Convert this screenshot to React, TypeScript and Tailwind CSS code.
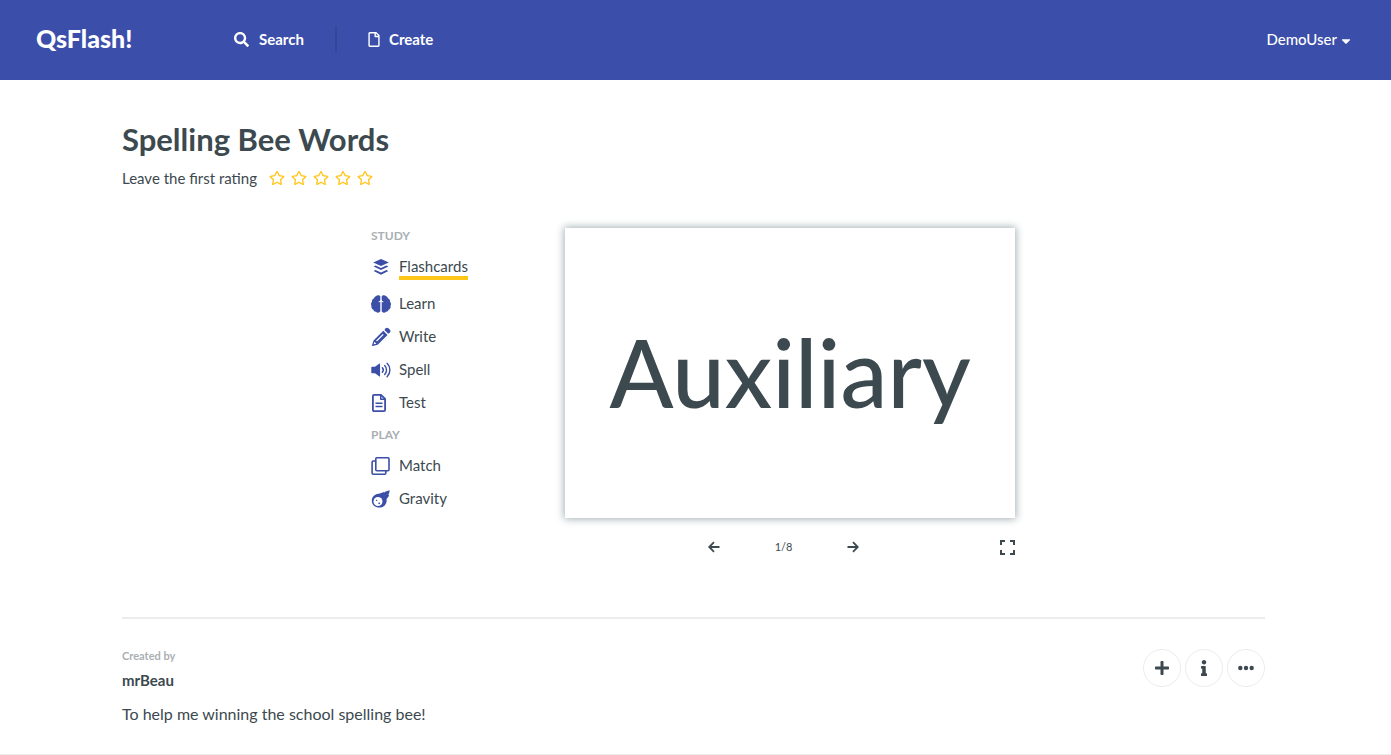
import { FaSearch, FaRegFile, FaRegStar, FaPlus, FaInfo, FaCaretDown } from 'react-icons/fa';
import type { ReactNode } from 'react';

function LayersIcon() {
  return (
    <svg viewBox="0 0 20 20" className="size-5" aria-hidden="true">
      <path d="M10 2 17.800 5.500 10 9 2.200 5.500Z" fill="currentColor" />
      <path d="m2.600 9.400 2-.9 5.400 2.400 5.400-2.400 2 .9L10 13Z" fill="currentColor" />
      <path d="m2.600 14 2-.9 5.400 2.400 5.400-2.400 2 .9L10 17.800Z" fill="currentColor" />
    </svg>
  );
}

function BrainIcon() {
  return (
    <svg viewBox="0 0 20 20" className="size-5" fill="currentColor" aria-hidden="true">
      <path d="M9.300 2.300v15c-.6 1.600-3.200 1.800-4.300.5-1.300.1-2.400-.8-2.600-2C.7 15 0 13.300.5 11.900-.3 10.600-.1 8.700 1 7.700c-.2-1.500.5-2.700 1.800-3.100C3.400 2.900 5 1.400 6.800 1.200c1.200-.1 2.200.3 2.500 1.100Z" />
      <path d="M10.700 2.300v15c.6 1.600 3.200 1.800 4.300.5 1.300.1 2.400-.8 2.600-2 1.700-.8 2.400-2.500 1.900-3.900.8-1.300.6-3.200-.5-4.200.2-1.500-.5-2.700-1.800-3.100-.6-1.700-2.200-3.200-4-3.400-1.200-.1-2.200.3-2.500 1.100Z" />
      <path d="M7.700 7.800c1.200 0 2-.5 2.300-1.300.3.800 1.100 1.300 2.300 1.300" fill="none" stroke="#fff" strokeWidth="1.100" />
    </svg>
  );
}

function PencilIcon() {
  return (
    <svg viewBox="0 0 20 20" className="size-5" fill="currentColor" aria-hidden="true">
      <path d="m13.900 2.100.8-.8c.8-.8 1.900-.8 2.700 0l1.500 1.500c.8.800.8 1.900 0 2.700l-.8.800c-.4.400-.9.400-1.300 0l-2.900-2.900c-.4-.4-.4-.9 0-1.300Z" />
      <path fillRule="evenodd" d="m12.300 3.800 4.200 4.200-9.800 9.700-5.100 1.200c-.4.100-.7-.2-.6-.6l1.500-4.900ZM11.800 6.900l-6.700 6.700.9.900 6.700-6.700ZM3.400 14.700l-.7 2.600 2.700-.6Z" />
    </svg>
  );
}

function SpeakerIcon() {
  return (
    <svg viewBox="0 0 21 20" className="h-5 w-[21px]" fill="none" stroke="currentColor" strokeWidth="1.500" strokeLinecap="round" aria-hidden="true">
      <path d="M.3 7.300c0-.4.300-.7.700-.7h3.200L8.500 3.400c.5-.4 1-.2 1 .4v12.400c0 .6-.5.800-1 .4l-4.300-3.200H1c-.4 0-.7-.3-.7-.7Z" fill="currentColor" stroke="none" />
      <path d="M11.900 7.700c1.200 1.300 1.200 3.300 0 4.600M14.400 5.300c2.500 2.600 2.500 6.800 0 9.400M16.900 3c3.900 3.900 3.900 10.100 0 14" />
    </svg>
  );
}

function DocumentIcon() {
  return (
    <svg viewBox="0 0 20 20" className="size-5" fill="none" stroke="currentColor" strokeWidth="1.800" strokeLinejoin="round" aria-hidden="true">
      <path d="M1.900 3a1.200 1.200 0 0 1 1.200-1.200h6.900L14.100 6v11a1.200 1.200 0 0 1-1.200 1.200H3.100A1.200 1.200 0 0 1 1.900 17Z" />
      <path d="M9.700 2v4.300h4.200M4.500 10.300h7M4.500 13.500h7" strokeWidth="1.500" />
    </svg>
  );
}

function CardsIcon() {
  return (
    <svg viewBox="0 0 20 20" className="size-5" fill="none" stroke="currentColor" strokeWidth="1.600" strokeLinejoin="round" aria-hidden="true">
      <rect x="4.800" y="1.800" width="13.200" height="13" rx="1" />
      <path d="M4.500 5H2.300A1.200 1.200 0 0 0 1.100 6.200v10.900a1.200 1.200 0 0 0 1.200 1.200h11.300a1.200 1.200 0 0 0 1.200-1.200v-2" />
    </svg>
  );
}

function CometIcon() {
  return (
    <svg viewBox="0 0 20 20" className="size-5" aria-hidden="true">
      <path d="M18.600 1.300c0 1.900-.5 3.300-1.300 4.600l.8.100c-.5 1.600-1.400 2.800-2.500 4 .7 4.900-2.700 8.600-7.300 8.600C4.100 18.600.8 15.600.8 11.700.8 8 3.600 5.200 7.300 4.800c2-.2 3.900-1.100 5.600-2l-.1.900c1.900-1.100 3.700-2 5.800-2.400Z" fill="currentColor" />
      <circle cx="7" cy="12.500" r="4.500" fill="#fff" />
      <circle cx="5.600" cy="11.400" r=".7" fill="currentColor" />
      <circle cx="8.200" cy="14.300" r=".9" fill="currentColor" />
    </svg>
  );
}

function ArrowIcon({ d }: { d: string }) {
  return (
    <svg viewBox="0 0 12 12" className="size-3" fill="none" stroke="currentColor" strokeWidth="1.800" aria-hidden="true">
      <path d={d} />
    </svg>
  );
}

function FullscreenIcon() {
  return (
    <svg viewBox="0 0 15 15" className="size-[15px]" fill="none" stroke="currentColor" strokeWidth="2" aria-hidden="true">
      <path d="M1 5V1h4M10 1h4v4M14 10v4h-4M5 14H1v-4" />
    </svg>
  );
}

function DotsIcon() {
  return (
    <svg viewBox="0 0 16 16" className="size-4" fill="currentColor" aria-hidden="true">
      <circle cx="2.300" cy="8" r="2.200" />
      <circle cx="8" cy="8" r="2.200" />
      <circle cx="13.700" cy="8" r="2.200" />
    </svg>
  );
}

function MenuItem({ icon, label, active }: { icon: ReactNode; label: string; active?: boolean }) {
  return (
    <li className={active ? 'mb-1' : ''}>
      <a href="#" className="flex h-[33px] items-center gap-2 text-[15px]">
        <span className="flex w-5 shrink-0 text-[#3b4ea8]">{icon}</span>
        <span className={active ? 'mt-[2px] border-b-4 border-[#ffc61a] leading-5' : 'pb-[2px] leading-5'}>{label}</span>
      </a>
    </li>
  );
}

function RoundButton({ label, children }: { label: string; children: ReactNode }) {
  return (
    <button aria-label={label} className="flex size-[38px] items-center justify-center rounded-full border border-[#ececec]">
      {children}
    </button>
  );
}

export default function App() {
  return (
    <div className="font-['Lato',sans-serif] text-[#3c494f]">
      <header className="flex h-20 items-center bg-[#3b4ea9] pr-[38px] pb-[2px] pl-9 text-[15px] font-bold text-white">
        <a href="#" className="w-[198px] text-[25px] font-black">QsFlash!</a>
        <nav className="flex items-center">
          <a href="#" className="flex w-[101px] items-center gap-[10px]"><FaSearch className="size-[15px]" />Search</a>
          <span className="h-[26px] w-[2px] bg-[#354697]" />
          <a href="#" className="ml-[31px] flex items-center gap-[9px]"><FaRegFile className="h-[15px] w-3" />Create</a>
        </nav>
        <button className="ml-auto flex items-center gap-[2px] font-medium">DemoUser<FaCaretDown className="mt-1 size-[14px]" /></button>
      </header>

      <main className="border-b border-[#ececec] pr-[126px] pb-[29px] pl-[122px]">
        <h1 className="pt-10 text-[31px] leading-[38px] font-bold">Spelling Bee Words</h1>
        <div className="mt-[10px] flex items-center gap-3 leading-5">
          <span className="text-[15px]">Leave the first rating</span>
          <div className="flex gap-[6px] text-[#ffc61a]">
            {[1, 2, 3, 4, 5].map((n) => (
              <button key={n} aria-label={`Rate ${n} of 5`}><FaRegStar className="size-4" /></button>
            ))}
          </div>
        </div>

        <section className="mt-10 flex justify-center pr-px">
          <nav className="w-[194px] shrink-0">
            <h2 className="text-[12px] leading-4 font-bold text-[#a9afb2]">STUDY</h2>
            <ul className="mt-[6px]">
              <MenuItem icon={<LayersIcon />} label="Flashcards" active />
              <MenuItem icon={<BrainIcon />} label="Learn" />
              <MenuItem icon={<PencilIcon />} label="Write" />
              <MenuItem icon={<SpeakerIcon />} label="Spell" />
              <MenuItem icon={<DocumentIcon />} label="Test" />
            </ul>
            <h2 className="mt-2 text-[12px] leading-4 font-bold text-[#a9afb2]">PLAY</h2>
            <ul className="mt-[6px]">
              <MenuItem icon={<CardsIcon />} label="Match" />
              <MenuItem icon={<CometIcon />} label="Gravity" />
            </ul>
          </nav>
          <div className="w-[450px]">
            <button className="flex h-[290px] w-full items-center justify-center pb-1 text-[94px] font-medium shadow-[0_0_8px_1px_#a3b0b4]">Auxiliary</button>
            <div className="mt-5 grid grid-cols-[1fr_auto_1fr] items-center">
              <span />
              <div className="flex items-center gap-[55px] pr-[13px]">
                <button aria-label="Previous card"><ArrowIcon d="M11.500 6H1.500M6 1.200 1.200 6 6 10.800" /></button>
                <span className="text-[11px] leading-[18px]">1/8</span>
                <button aria-label="Next card"><ArrowIcon d="M.5 6h10M6 1.200 10.800 6 6 10.800" /></button>
              </div>
              <button aria-label="Full screen" className="justify-self-end"><FullscreenIcon /></button>
            </div>
          </div>
        </section>

        <hr className="mt-[61px] border-t-2 border-[#ececec]" />

        <section className="mt-[30px] flex items-start justify-between">
          <div>
            <p className="text-[11px] leading-[14px] font-bold text-[#a9afb2]">Created by</p>
            <p className="mt-2 text-[15px] leading-[18px] font-bold">mrBeau</p>
            <p className="mt-[15px] pb-px text-[16px] leading-5">To help me winning the school spelling bee!</p>
          </div>
          <div className="flex gap-1">
            <RoundButton label="Add"><FaPlus className="size-4" /></RoundButton>
            <RoundButton label="Information"><FaInfo className="size-4" /></RoundButton>
            <RoundButton label="More"><DotsIcon /></RoundButton>
          </div>
        </section>
      </main>
    </div>
  );
}
